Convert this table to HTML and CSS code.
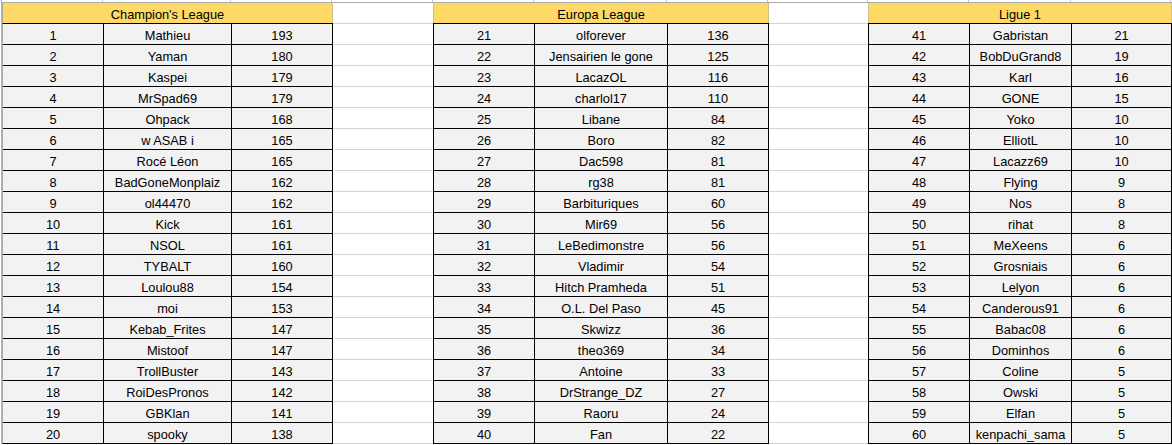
FILE: index.html
```html
<!DOCTYPE html>
<html lang="fr">
<head>
<meta charset="utf-8">
<title>Classement</title>
<link rel="stylesheet" href="styles.css">
</head>
<body>
<div class="sheet">
  <div class="strip">
    <span class="c100"></span><span class="c127"></span><span class="c100"></span>
    <span class="c100"></span>
    <span class="c100"></span><span class="c132"></span><span class="c100"></span>
    <span class="c99"></span>
    <span class="c100"></span><span class="c101"></span><span class="c99"></span>
  </div>
  <div class="row">
    <section class="table t1">
      <div class="head">Champion's League</div>
      <div class="grid g1">
        <div>1</div><div>Mathieu</div><div>193</div>
        <div>2</div><div>Yaman</div><div>180</div>
        <div>3</div><div>Kaspei</div><div>179</div>
        <div>4</div><div>MrSpad69</div><div>179</div>
        <div>5</div><div>Ohpack</div><div>168</div>
        <div>6</div><div>w ASAB i</div><div>165</div>
        <div>7</div><div>Rocé Léon</div><div>165</div>
        <div>8</div><div>BadGoneMonplaiz</div><div>162</div>
        <div>9</div><div>ol44470</div><div>162</div>
        <div>10</div><div>Kick</div><div>161</div>
        <div>11</div><div>NSOL</div><div>161</div>
        <div>12</div><div>TYBALT</div><div>160</div>
        <div>13</div><div>Loulou88</div><div>154</div>
        <div>14</div><div>moi</div><div>153</div>
        <div>15</div><div>Kebab_Frites</div><div>147</div>
        <div>16</div><div>Mistoof</div><div>147</div>
        <div>17</div><div>TrollBuster</div><div>143</div>
        <div>18</div><div>RoiDesPronos</div><div>142</div>
        <div>19</div><div>GBKlan</div><div>141</div>
        <div>20</div><div>spooky</div><div>138</div>
      </div>
    </section>
    <div class="gap gap1"></div>
    <section class="table t2">
      <div class="head">Europa League</div>
      <div class="grid g2">
        <div>21</div><div>olforever</div><div>136</div>
        <div>22</div><div>Jensairien le gone</div><div>125</div>
        <div>23</div><div>LacazOL</div><div>116</div>
        <div>24</div><div>charlol17</div><div>110</div>
        <div>25</div><div>Libane</div><div>84</div>
        <div>26</div><div>Boro</div><div>82</div>
        <div>27</div><div>Dac598</div><div>81</div>
        <div>28</div><div>rg38</div><div>81</div>
        <div>29</div><div>Barbituriques</div><div>60</div>
        <div>30</div><div>Mir69</div><div>56</div>
        <div>31</div><div>LeBedimonstre</div><div>56</div>
        <div>32</div><div>Vladimir</div><div>54</div>
        <div>33</div><div>Hitch Pramheda</div><div>51</div>
        <div>34</div><div>O.L. Del Paso</div><div>45</div>
        <div>35</div><div>Skwizz</div><div>36</div>
        <div>36</div><div>theo369</div><div>34</div>
        <div>37</div><div>Antoine</div><div>33</div>
        <div>38</div><div>DrStrange_DZ</div><div>27</div>
        <div>39</div><div>Raoru</div><div>24</div>
        <div>40</div><div>Fan</div><div>22</div>
      </div>
    </section>
    <div class="gap gap2"></div>
    <section class="table t3">
      <div class="head">Ligue 1</div>
      <div class="grid g3">
        <div>41</div><div>Gabristan</div><div>21</div>
        <div>42</div><div>BobDuGrand8</div><div>19</div>
        <div>43</div><div>Karl</div><div>16</div>
        <div>44</div><div>GONE</div><div>15</div>
        <div>45</div><div>Yoko</div><div>10</div>
        <div>46</div><div>ElliotL</div><div>10</div>
        <div>47</div><div>Lacazz69</div><div>10</div>
        <div>48</div><div>Flying</div><div>9</div>
        <div>49</div><div>Nos</div><div>8</div>
        <div>50</div><div>rihat</div><div>8</div>
        <div>51</div><div>MeXeens</div><div>6</div>
        <div>52</div><div>Grosniais</div><div>6</div>
        <div>53</div><div>Lelyon</div><div>6</div>
        <div>54</div><div>Canderous91</div><div>6</div>
        <div>55</div><div>Babac08</div><div>6</div>
        <div>56</div><div>Dominhos</div><div>6</div>
        <div>57</div><div>Coline</div><div>5</div>
        <div>58</div><div>Owski</div><div>5</div>
        <div>59</div><div>Elfan</div><div>5</div>
        <div>60</div><div>kenpachi_sama</div><div>5</div>
      </div>
    </section>
  </div>
</div>
</body>
</html>
```
FILE: styles.css
```css
* { box-sizing: content-box; }

body {
  margin: 0;
  background: #ffffff;
  font-family: "Liberation Sans", Arial, sans-serif;
  font-size: 12.8px;
  color: #000000;
}

.sheet {
  width: 1172px;
  height: 445px;
  overflow: hidden;
}

.strip {
  display: flex;
  height: 2px;
  margin-left: 1px;
  border-left: 1px solid #b4b4b4;
}
.strip span {
  display: block;
  height: 2px;
  border-right: 1px solid #c8c8c8;
}
.strip .c99 { width: 99px; }
.strip .c100 { width: 100px; }
.strip .c101 { width: 101px; }
.strip .c127 { width: 127px; }
.strip .c132 { width: 132px; }

.row {
  display: flex;
  align-items: flex-start;
  margin-left: 1px;
  border-top: 1px solid #ababab;
  border-left: 1px solid #b4b4b4;
}

.table {
  display: flex;
  flex-direction: column;
}

.head {
  height: 20px;
  line-height: 15px;
  background: #ffd966;
  border-left: 1px solid #d0c08a;
  border-right: 1px solid #d0c08a;
  display: flex;
  align-items: flex-end;
  justify-content: center;
  box-sizing: border-box;
  padding-bottom: 1px;
  white-space: nowrap;
}

.grid {
  display: grid;
  grid-auto-rows: 20px;
  gap: 1px;
  background: #000000;
  border: 1px solid #000000;
}
.grid > div {
  background: #f2f2f2;
  display: flex;
  align-items: flex-end;
  justify-content: center;
  line-height: 15px;
  padding-bottom: 1px;
  box-sizing: border-box;
  white-space: nowrap;
  overflow: hidden;
}

.t1 { width: 331px; }
.t1 .head { width: 331px; border-left-color: #a8a8a8; }
.g1 { grid-template-columns: 100px 127px 100px; border-left-color: #a8a8a8; }

.t2 { width: 336px; }
.t2 .head { width: 336px; }
.g2 { grid-template-columns: 100px 132px 100px; }

.t3 { width: 304px; }
.t3 .head { width: 304px; }
.g3 { grid-template-columns: 100px 101px 99px; }

.gap {
  height: 441px;
  background-image: repeating-linear-gradient(to bottom, transparent 0 20px, #d4d4d4 20px 21px);
}
.gap1 { width: 100px; }
.gap2 { width: 99px; }
```
